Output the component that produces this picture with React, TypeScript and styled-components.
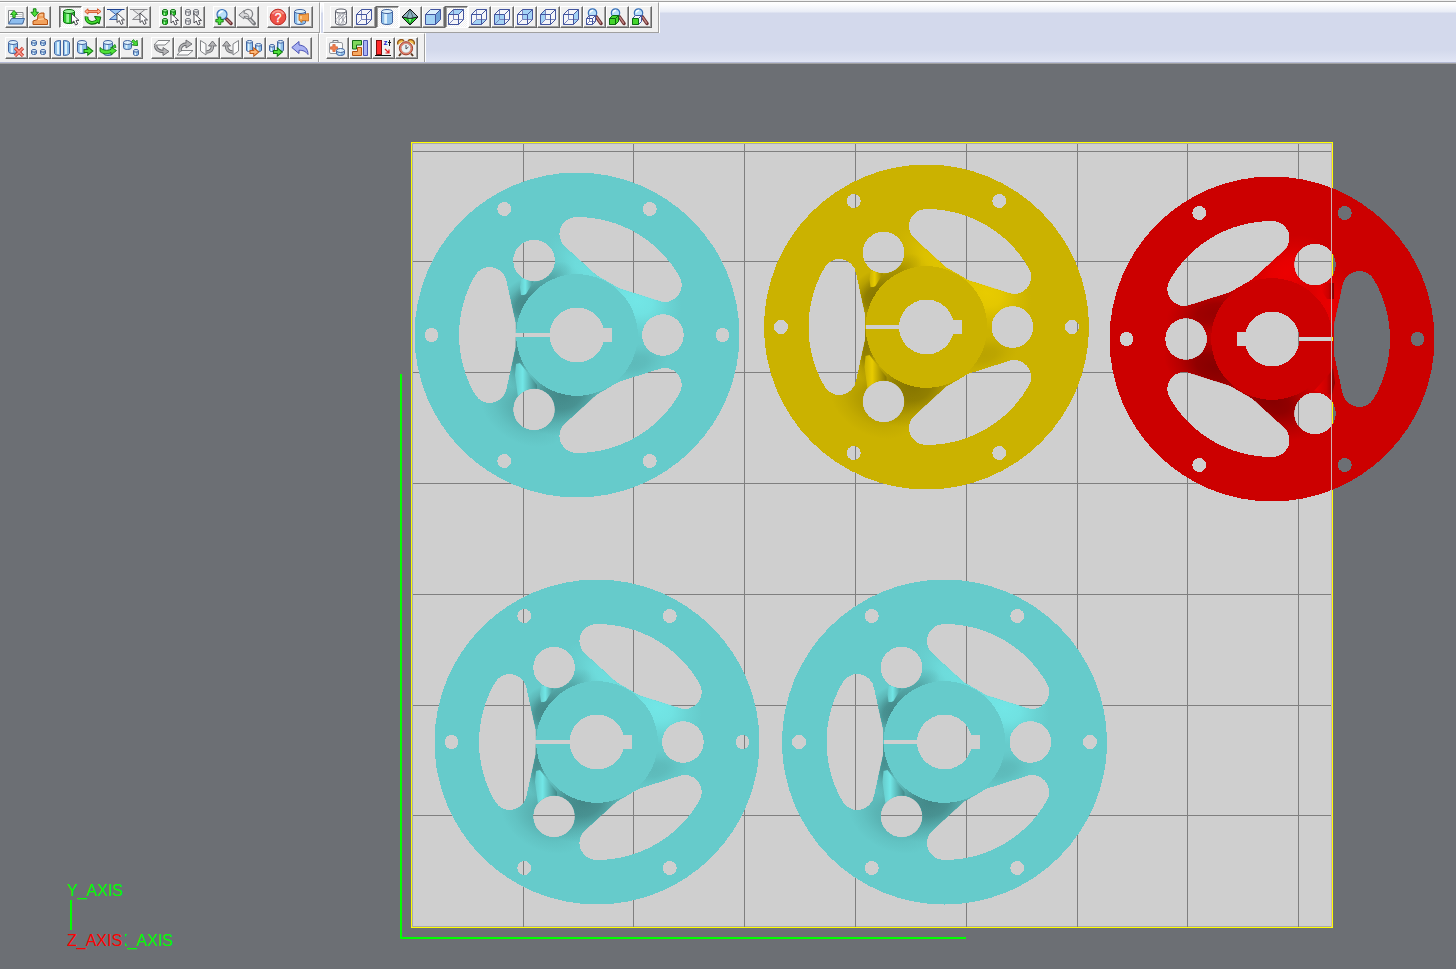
import React from "react";
import styled, { createGlobalStyle } from "styled-components";

const GlobalStyle = createGlobalStyle`
  *, *::before, *::after { box-sizing: border-box; }
  html, body { margin: 0; padding: 0; }
  body { background: #6c6f74; font-family: "Liberation Sans", Arial, sans-serif; }
`;

const Page = styled.div`
  display: grid;
  grid-template-rows: auto minmax(0, 1fr);
  height: 100vh;
  overflow: hidden;
`;

const Header = styled.header`
  display: flex;
  flex-direction: column;
  border-top: 1px solid #f0f0f0;
  border-bottom: 1px solid #a0a0a0;
  box-shadow: inset 0 1px 0 #a0a0a0, inset 0 -1px 0 #b4bad4;
  padding: 1px 0;
  background: linear-gradient(
    to bottom,
    #ffffff 0px,
    #fdfdfe 3px,
    #e8ecf6 11px,
    #d3d9ec 12px,
    #d3d9ec 49px,
    #e2e6f5 62px
  );
`;

const BarRow = styled.div<{ $gap: number }>`
  display: flex;
  gap: ${(p) => p.$gap}px;
`;

const Toolbar = styled.div<{ $first?: boolean; $ruled?: boolean }>`
  display: flex;
  gap: 8px;
  padding: 3px 6px ${(p) => (p.$ruled ? 4 : 3)}px ${(p) => (p.$first ? 5 : 6)}px;
  background: #f0f0f0;
  border: 0 solid #a0a0a0;
  border-top: 1px solid #ffffff;
  border-right-width: 1px;
  border-left: ${(p) => (p.$first ? "0" : "1px solid #ffffff")};
  border-bottom-width: ${(p) => (p.$ruled ? 1 : 0)}px;
  box-shadow: 1px 0 0 #ffffff;
`;

const Group = styled.div`
  display: flex;
`;

const ToolButton = styled.button<{ $pressed?: boolean }>`
  display: flex;
  width: 23px;
  height: 22px;
  padding: 1px;
  border: 1px solid;
  border-color: ${(p) => (p.$pressed ? "#696969 #ffffff #ffffff #696969" : "#ffffff #696969 #696969 #ffffff")};
  box-shadow: ${(p) => (p.$pressed ? "inset 1px 1px 0 #a0a0a0" : "inset -1px -1px 0 #a0a0a0")};
  background: ${(p) =>
    p.$pressed ? "repeating-conic-gradient(#ffffff 0 25%, #f0f0f0 0 50%) 0 0 / 2px 2px" : "#f0f0f0"};
`;

const Glyph = styled.svg`
  display: block;
  flex: none;
  width: 18px;
  height: 18px;
`;

const Viewport = styled.main`
  min-height: 0;
  background: #6c6f74;
`;

const Scene = styled.svg`
  display: block;
  width: 100%;
  height: 100%;
  font-family: "Liberation Sans", Arial, sans-serif;
  font-size: 16px;
`;

/* ---------- icon parts ---------- */

type Tone = "blue" | "green" | "gray";
const tones: Record<Tone, { fill: string; light: string; line: string }> = {
  blue: { fill: "#8fc0ea", light: "#def1fc", line: "#41639f" },
  green: { fill: "#2fc92f", light: "#9af59a", line: "#0c7010" },
  gray: { fill: "#c4c4c8", light: "#f4f4f4", line: "#6d7078" },
};

const Cyl = ({ x, y, w, h, tone = "blue" }: { x: number; y: number; w: number; h: number; tone?: Tone }) => {
  const t = tones[tone];
  const r = w > 7 ? 2 : 1.3;
  const body = `M${x} ${y + r}V${y + h - r}A${w / 2} ${r} 0 0 0 ${x + w} ${y + h - r}V${y + r}`;
  return (
    <g>
      <path d={body} fill={t.fill} stroke={t.line} />
      <rect x={x + w * 0.25} y={y + r + 1} width={w * 0.25} height={h - r * 2} fill={t.light} />
      <ellipse cx={x + w / 2} cy={y + r} rx={w / 2} ry={r} fill={t.light} stroke={t.line} />
    </g>
  );
};

const Cursor = ({ x = 9, y = 5 }: { x?: number; y?: number }) => (
  <path
    transform={`translate(${x} ${y})`}
    d="M.5 .5V10L2.8 8L4.5 12L6.6 11L5 7.4H8Z"
    fill="#fff"
    stroke="#3c3c44"
    strokeWidth=".9"
  />
);

const arrowPath = "M0 -1.4H3.6V-4L8.4 0L3.6 4V1.4H0Z";
const Arrow = ({ x, y, turn = 0, size = 1, fill = "#4fe23a", line = "#0f7a10" }: {
  x: number; y: number; turn?: number; size?: number; fill?: string; line?: string;
}) => (
  <path transform={`translate(${x} ${y}) rotate(${turn}) scale(${size})`} d={arrowPath} fill={fill} stroke={line} />
);

type Face = "top" | "bottom" | "front" | "back" | "left" | "right" | "solid" | "none";
const faces: Partial<Record<Face, string>> = {
  top: "M1.5 6.5L6.5 1.5H16.5L11.5 6.5Z",
  bottom: "M1.5 16.5L6.5 11.5H16.5L11.5 16.5Z",
  front: "M1.5 6.5H11.5V16.5H1.5Z",
  back: "M6.5 1.5H16.5V11.5H6.5Z",
  left: "M1.5 6.5L6.5 1.5V11.5L1.5 16.5Z",
  right: "M11.5 6.5L16.5 1.5V11.5L11.5 16.5Z",
};

const Cube = ({ face }: { face: Face }) => (
  <g strokeLinejoin="round">
    {face === "solid" ? (
      <>
        <path d="M1.5 6.5L6.5 1.5H16.5V11.5L11.5 16.5H1.5Z" fill="#a3d2f5" />
        <path d={faces.top} fill="#dcf0fc" />
        <path d={faces.right} fill="#6fa5da" />
      </>
    ) : (
      <>
        <path d="M1.5 6.5L6.5 1.5H16.5V11.5L11.5 16.5H1.5Z" fill="#f4f5f9" />
        {faces[face] && <path d={faces[face]} fill="#a3d2f5" />}
        <path d="M6.5 1.5V11.5H16.5M6.5 11.5L1.5 16.5" fill="none" stroke="#7884bd" />
      </>
    )}
    <path
      d="M1.5 6.5L6.5 1.5H16.5V11.5L11.5 16.5H1.5ZM1.5 6.5H11.5V16.5M11.5 6.5L16.5 1.5"
      fill="none"
      stroke="#43559f"
    />
  </g>
);

const Lens = ({ x = 6.5, y = 6, r = 4.6 }: { x?: number; y?: number; r?: number }) => (
  <g>
    <path d={`M${x + r * 0.85} ${y + r * 0.85}L16 15.5`} stroke="#6b3032" strokeWidth="3.4" strokeLinecap="round" />
    <path d={`M${x + r} ${y + r}L15.6 15`} stroke="#c08482" strokeWidth="1.4" strokeLinecap="round" />
    <circle cx={x} cy={y} r={r} fill="#b8dff9" stroke="#3a70b8" strokeWidth="1.2" />
    <path d={`M${x - r * 0.55} ${y - 0.4}a${r * 0.6} ${r * 0.6} 0 0 1 ${r * 0.7} ${-r * 0.5}`} stroke="#fff" strokeWidth="1.6" fill="none" />
  </g>
);

const LensCube = ({ fill, all }: { fill: string; all?: boolean }) => (
  <g>
    <Lens x={7.5} y={5} r={4.2} />
    <path d="M1.5 10.5L4.5 7.5H10.5V13.5L7.5 16.5H1.5Z" fill={all ? fill : "#f4f6fc"} stroke={all ? "#0c6a10" : "#43559f"} />
    <path d="M1.5 10.5H7.5V16.5H1.5Z" fill={fill} stroke={fill === "#fff" ? "#43559f" : "#0c6a10"} />
    <path d="M7.5 10.5L10.5 7.5" stroke={all ? "#0c6a10" : "#43559f"} />
    {fill === "#fff" && <path d="M4.5 7.5V13.5H10.5M4.5 13.5L1.5 16.5" stroke="#43559f" strokeWidth=".7" fill="none" />}
  </g>
);

const Hourglass = ({ gray }: { gray?: boolean }) => (
  <g>
    <path
      d="M2.5 1.5L15 11.5H2.5L15 1.5Z"
      fill={gray ? "#e2e2e2" : "#9cc6f2"}
      stroke={gray ? "#8b8b8f" : "#3c62ac"}
    />
    <path d="M0 1.5H17.5" stroke={gray ? "#8b8b8f" : "#1d3f8e"} />
    <Cursor x={9.5} y={4.5} />
  </g>
);

const CylGrid = ({ tone }: { tone: Tone }) => (
  <g>
    <Cyl x={1.5} y={1.5} w={5} h={6} tone={tone} />
    <Cyl x={9.5} y={1.5} w={5} h={6} tone={tone} />
    <Cyl x={1.5} y={10.5} w={5} h={6} tone={tone} />
  </g>
);

const FoldArrow = ({ kind }: { kind: 0 | 1 | 2 | 3 }) => {
  const sheet = ["M1 6L5 1.5H17L12 6Z", "M1 16L5 11.5H17L12 16Z", "M1.5 1.5L7 5V16L1.5 12Z", "M16.5 1.5L11 5V16L16.5 12Z"][kind];
  const curve = ["M2.5 6.5C3 11 7 12.5 11 12.5", "M4 12.5C3.5 7 7 5 11 5", "M7.5 13C11.5 13 13.5 11 13.5 6.5", "M10.5 13C6.5 13 4.5 11 4.5 6.5"][kind];
  const head = ["M10 8.5L16 12.5L10 16.5Z", "M10 1L16 5L10 9Z", "M9.5 7L13.5 2L17.5 7Z", "M.5 7L4.5 2L8.5 7Z"][kind];
  return (
    <g>
      <path d={sheet} fill="#fbfbfb" stroke="#75777b" strokeWidth=".9" />
      <path d={curve} fill="none" stroke="#66686c" strokeWidth="3.4" />
      <path d={head} fill="#b4b4b6" stroke="#66686c" strokeWidth=".9" />
      <path d={curve} fill="none" stroke="#b4b4b6" strokeWidth="1.7" />
    </g>
  );
};

const drawings: Record<string, React.ReactNode> = {
  open: (
    <>
      <path d="M1.5 15V2.5H6L7.5 4.5H16V15Z" fill="#fafafa" stroke="#85888c" />
      <path d="M3 6.5H15M3 8.5H15" stroke="#b8babd" strokeWidth=".8" />
      <path d="M1.5 16L4.5 10.5H17.5L15.5 16Z" fill="#8dbdee" stroke="#41689f" />
      <Arrow x={7} y={9.5} turn={-90} size={0.85} />
    </>
  ),
  importPart: (
    <>
      <path d="M3 16.5V13L7.5 11.5L8 6.5L11 5H14V10.5L17.5 12V16.5Z" fill="#f2a15c" stroke="#b4500f" />
      <path d="M8 11.5L14 10.8M9.5 7H13" stroke="#ffd9ae" />
      <Arrow x={4.7} y={0.8} turn={90} size={0.95} />
    </>
  ),
  selectPart: (<><Cyl x={2.5} y={1.5} w={11} h={14} tone="green" /><Cursor x={10} y={5} /></>),
  movePart: (
    <>
      <path d="M.8 3.5L4 .8V2.6H13.5V.8L17 3.5L13.5 6.2V4.4H4V6.2Z" fill="#ffb08a" stroke="#cf4a1c" strokeWidth=".9" />
      <path d="M2.5 8.5C2 15 9 16.5 13.5 13" fill="none" stroke="#0b6a0b" strokeWidth="3.8" />
      <path d="M10.5 8.5L16.8 9L15 16Z" fill="#35d421" stroke="#0b6a0b" />
      <path d="M2.5 9C2 15 9 16 13.5 12.8" fill="none" stroke="#45dd31" strokeWidth="1.9" />
    </>
  ),
  selectTriangles: <Hourglass />,
  selectTrianglesOff: <Hourglass gray />,
  selectAll: (<><CylGrid tone="green" /><Cursor x={9.5} y={5} /></>),
  selectNone: (<><CylGrid tone="gray" /><Cursor x={9.5} y={5} /></>),
  zoomIn: (
    <>
      <Lens x={7} y={6.5} r={5} />
      <path d="M3.2 9H5.8V11.4H8.2V14H5.8V16.5H3.2V14H.8V11.4H3.2Z" fill="#48e038" stroke="#0b6a0b" strokeWidth=".8" />
    </>
  ),
  zoomBack: (
    <>
      <path d="M11 10L16 15.5" stroke="#77797d" strokeWidth="4" strokeLinecap="round" />
      <path d="M11.5 11L15.6 15.2" stroke="#cfcfd1" strokeWidth="1.5" />
      <circle cx="10" cy="6" r="4.6" fill="#eee" stroke="#808286" strokeWidth="1.3" />
      <path d="M.8 7L6 2.5V5.2C9 5 11 6.5 11 9.5C9.5 8.4 8 8.2 6 8.6V11Z" fill="#d8d8da" stroke="#77797d" strokeWidth=".9" />
    </>
  ),
  help: (
    <>
      <circle cx="9" cy="9" r="7.8" fill="#ee5247" stroke="#bb2b26" />
      <path d="M3.5 6A6.4 6.4 0 0 1 14.5 6" fill="none" stroke="#f8978c" strokeWidth="1.6" />
      <text x="9" y="13.6" fontSize="12" textAnchor="middle" fill="#fff" stroke="#fff" strokeWidth=".3">?</text>
    </>
  ),
  partInfo: (
    <>
      <Cyl x={2.5} y={1.5} w={11} h={15} />
      <path d="M7 6.5H11L16.5 5.5V13L11 12.5H10V14.5L7.5 12.5H7Z" fill="#f2a04a" stroke="#c46a1a" strokeWidth=".8" />
      <path d="M9 8V11" stroke="#fff0c8" />
    </>
  ),
  mesh: (
    <>
      <path d="M3.5 3V15A5.5 2 0 0 0 14.5 15V3A5.5 2 0 0 0 3.5 3A5.5 2 0 0 0 14.5 3" fill="#fdfdfd" stroke="#5c5f69" />
      <path d="M3.5 3L7 8L3.5 12L8 17L11 12L14.5 16M7 5L11 12L14.5 7L11 5L7 8V16M14.5 3L11 8L7 12M11 5V17" fill="none" stroke="#8b8e98" strokeWidth=".7" />
    </>
  ),
  wire: <Cube face="none" />,
  shaded: <Cyl x={3.5} y={1.5} w={11} h={15} />,
  diamond: (
    <>
      <path d="M1 9L9 1L17 9L9 17Z" fill="#26d926" stroke="#111" />
      <path d="M1 9L9 1L17 9L9 10.5Z" fill="#8fb2bf" stroke="#111" />
      <path d="M9 1L6 9.5L9 16.5L12 9.5Z" fill="none" stroke="#1c3238" strokeWidth=".6" />
      <path d="M7.5 11L9 10.8L10.5 11L9 15Z" fill="#7cff7c" />
    </>
  ),
  solid: <Cube face="solid" />,
  top: <Cube face="top" />,
  bottom: <Cube face="bottom" />,
  front: <Cube face="front" />,
  back: <Cube face="back" />,
  left: <Cube face="left" />,
  right: <Cube face="right" />,
  zoomWire: <LensCube fill="#fff" />,
  zoomSolid: <LensCube fill="#44d52c" all />,
  zoomFace: <LensCube fill="#44d52c" />,
  removePart: (
    <>
      <Cyl x={1.5} y={1.5} w={9} h={13} />
      <path d="M8 9L16 17M16 9L8 17" stroke="#c4382c" strokeWidth="3.2" />
      <path d="M8.3 9.3L15.7 16.7M15.7 9.3L8.3 16.7" stroke="#ff9a8a" strokeWidth="1.6" />
    </>
  ),
  arrange: (
    <>
      <Cyl x={1.5} y={1.5} w={5} h={5} /><Cyl x={10.5} y={1.5} w={5} h={5} />
      <Cyl x={1.5} y={10.5} w={5} h={5} /><Cyl x={10.5} y={10.5} w={5} h={5} />
    </>
  ),
  split: (
    <>
      <path d="M7.5 1.5C4 1.5 1.5 2.5 1.5 4V14C1.5 15.6 4 16.5 7.5 16.5Z" fill="#8fc0ea" stroke="#41639f" />
      <path d="M10.5 1.5C14 1.5 16.5 2.5 16.5 4V14C16.5 15.6 14 16.5 10.5 16.5Z" fill="#8fc0ea" stroke="#41639f" />
      <path d="M5 3V15M13 3V15" stroke="#def1fc" strokeWidth="2" />
    </>
  ),
  movePartTo: (<><Cyl x={1.5} y={1.5} w={9} h={13} /><Arrow x={8} y={12} size={1.05} /></>),
  rotatePart: (
    <>
      <Cyl x={4.5} y={1.5} w={9} h={15} />
      <path d="M1 12.5C4 15.5 9 15.5 12 13.5V16L17.5 11.5L12 8V10.3C8 12 4 11.5 1 8.5Z" fill="#4fe23a" stroke="#0f7a10" strokeWidth=".9" />
      <path d="M16 5.5L17 8.5L13 8Z" fill="#4fe23a" stroke="#0f7a10" strokeWidth=".8" />
    </>
  ),
  scalePart: (<><Cyl x={1.5} y={1.5} w={8} h={9} /><Cyl x={11.5} y={10.5} w={5} h={6} /><Arrow x={10.5} y={1.5} turn={45} size={0.85} /></>),
  foldDown: <FoldArrow kind={0} />,
  foldUp: <FoldArrow kind={1} />,
  foldRight: <FoldArrow kind={2} />,
  foldLeft: <FoldArrow kind={3} />,
  copyPart: (<><Cyl x={1.5} y={1.5} w={6} h={11} /><Cyl x={10.5} y={4.5} w={6} h={8} /><Arrow x={5} y={13} size={1.05} fill="#ffb877" line="#c05c18" /></>),
  mergePart: (<><Cyl x={1.5} y={5.5} w={5} h={7} /><Cyl x={9.5} y={1.5} w={6} h={11} /><Arrow x={5.5} y={13} size={1.05} /></>),
  undo: <path d="M.8 8.5L8 2.5V6C13.5 6.5 17 9.5 17 15.5C14.5 12 12 11.3 8 11.3V14.5Z" fill="#a9b2f2" stroke="#4a52b4" />,
  repair: (
    <>
      <path d="M5 4V1.5H10V4" fill="none" stroke="#777a80" />
      <rect x="1.5" y="3.5" width="13" height="11" rx="1.5" fill="#fafafa" stroke="#94979c" />
      <path d="M4.8 5.5H7.2V7.8H9.5V10.2H7.2V12.5H4.8V10.2H2.5V7.8H4.8Z" fill="#f08050" stroke="#c9501f" strokeWidth=".6" />
      <Cyl x={8.5} y={9.5} w={8} h={7} />
    </>
  ),
  nest: (
    <>
      <path d="M1.5 1.5H10.5V6H5.5V10H1.5Z" fill="#7fd85a" stroke="#136a13" />
      <path d="M12.5 1.5H16.5V16.5H12.5Z" fill="#a9b2f2" stroke="#4a52b4" />
      <path d="M10.5 8.5H6.5V12.5H1.5V16.5H10.5Z" fill="#f7a860" stroke="#b4500f" />
    </>
  ),
  zHeight: (
    <>
      <rect x="2.5" y="1.5" width="5" height="14" fill="#ff2a2a" stroke="#7b0d0d" />
      <path d="M1 16.5H17" stroke="#111" />
      <text x="9.4" y="6" fontSize="8" fontWeight="bold" fill="#2026c8">z</text>
      <path d="M15.5 1V7M14 3.5H17" stroke="#15151d" />
      <path d="M11 10L14.5 13.5M15 10.5V14H11.5" stroke="#e02020" fill="none" strokeWidth="1.2" />
    </>
  ),
  clock: (
    <>
      <path d="M1 5.5A3.5 3.5 0 0 1 7 2M17 5.5A3.5 3.5 0 0 0 11 2" fill="#f5c04c" stroke="#93571a" strokeWidth="1.3" />
      <path d="M4 14.5L2 17M14 14.5L16 17" stroke="#59361c" strokeWidth="2" />
      <circle cx="9" cy="9.3" r="6.6" fill="#ea7a64" stroke="#97422f" />
      <circle cx="9" cy="9.3" r="4.8" fill="#e9f2f4" stroke="#b98f83" strokeWidth=".8" />
      <path d="M9 6V10L11.5 8" fill="none" stroke="#4a4a52" />
    </>
  ),
};

type Tool = { icon: string; label: string; pressed?: boolean };
const t = (icon: string, label: string, pressed = false): Tool => ({ icon, label, pressed });

const fileTools: Tool[][] = [
  [t("open", "Open"), t("importPart", "Import part")],
  [
    t("selectPart", "Select part", true),
    t("movePart", "Move or rotate"),
    t("selectTriangles", "Select triangles"),
    t("selectTrianglesOff", "Deselect triangles"),
  ],
  [t("selectAll", "Select all"), t("selectNone", "Select none")],
  [t("zoomIn", "Zoom in"), t("zoomBack", "Previous zoom")],
  [t("help", "Help"), t("partInfo", "Part information")],
];

const viewTools: Tool[][] = [
  [
    t("mesh", "Triangles"),
    t("wire", "Wireframe"),
    t("shaded", "Shaded", true),
    t("diamond", "Facets"),
    t("solid", "Isometric view"),
    t("top", "Top view", true),
    t("bottom", "Bottom view"),
    t("front", "Front view"),
    t("back", "Back view"),
    t("left", "Left view"),
    t("right", "Right view"),
    t("zoomWire", "Zoom platform"),
    t("zoomSolid", "Zoom parts"),
    t("zoomFace", "Zoom selection"),
  ],
];

const partTools: Tool[][] = [
  [
    t("removePart", "Remove part"),
    t("arrange", "Arrange parts"),
    t("split", "Split part"),
    t("movePartTo", "Move part"),
    t("rotatePart", "Rotate part"),
    t("scalePart", "Scale part"),
  ],
  [
    t("foldDown", "Turn down"),
    t("foldUp", "Turn up"),
    t("foldRight", "Turn right"),
    t("foldLeft", "Turn left"),
    t("copyPart", "Copy part"),
    t("mergePart", "Merge parts"),
    t("undo", "Undo"),
  ],
];

const jobTools: Tool[][] = [
  [t("repair", "Repair"), t("nest", "Nest"), t("zHeight", "Z height"), t("clock", "Build time")],
];

const ToolStrip = ({ groups, label, first, ruled }: {
  groups: Tool[][]; label: string; first?: boolean; ruled?: boolean;
}) => (
  <Toolbar role="toolbar" aria-label={label} $first={first} $ruled={ruled}>
    {groups.map((group) => (
      <Group key={group[0].icon}>
        {group.map((tool) => (
          <ToolButton key={tool.icon} type="button" aria-label={tool.label} aria-pressed={tool.pressed} $pressed={tool.pressed}>
            <Glyph viewBox="0 0 18 18" fill="none" aria-hidden="true">
              {drawings[tool.icon]}
            </Glyph>
          </ToolButton>
        ))}
      </Group>
    ))}
  </Toolbar>
);

/* ---------- parts on the build platform ---------- */

const circle = (cx: number, cy: number, r: number) =>
  `M${cx - r} ${cy}a${r} ${r} 0 1 0 ${2 * r} 0a${r} ${r} 0 1 0 ${-2 * r} 0Z`;

const polar = (x: number, y: number, deg: number) => {
  const a = (deg * Math.PI) / 180;
  return `${(x * Math.cos(a) - y * Math.sin(a)).toFixed(2)} ${(x * Math.sin(a) + y * Math.cos(a)).toFixed(2)}`;
};

const slot = (deg: number) => {
  const p = (x: number, y: number) => polar(x, y, deg);
  return (
    `M${p(-102, 59.3)}A118 118 0 0 1 ${p(-102, -59.3)}A17 17 0 0 1 ${p(-70.4, -53.6)}` +
    `L${p(-61.5, -13)}L${p(-61.5, 13)}L${p(-70.4, 53.6)}A17 17 0 0 1 ${p(-102, 59.3)}Z`
  );
};

const onRing = (r: number, deg: number): [number, number] => [
  r * Math.cos((deg * Math.PI) / 180),
  r * Math.sin((deg * Math.PI) / 180),
];

const borePath = "M26.6 -7H35V7H26.6A27.5 27.5 0 0 1 -27.4 2H-61.5V-2H-27.4A27.5 27.5 0 0 1 26.6 -7Z";

const flangePath = [
  circle(0, 0, 162.5),
  ...[0, 60, 120, 180, 240, 300].map((d) => circle(...onRing(145.5, d), 7)),
  ...[0, 120, 240].map((d) => circle(...onRing(85.9, d), 20.8)),
  ...[0, 120, 240].map(slot),
  borePath,
].join("");

const hubPath = circle(0, 0, 60.8) + borePath;

type Paint = { base: string; light: string; dark: string };
const paints: Record<string, Paint> = {
  cyan: { base: "#66cbcb", light: "#72e6e6", dark: "#438888" },
  yellow: { base: "#cbb200", light: "#e8cb00", dark: "#877600" },
  red: { base: "#cc0000", light: "#ec0000", dark: "#860000" },
};

type Shade = { cx: number; cy: number; rx: number; ry: number; turn?: number; tone: "light" | "dark"; alpha: number };

const frontShades: Shade[] = [
  { cx: 60, cy: -34, rx: 46, ry: 36, turn: 20, tone: "light", alpha: 1 },
  { cx: 12, cy: -62, rx: 52, ry: 20, turn: 42, tone: "light", alpha: 0.7 },
  { cx: 58, cy: 28, rx: 34, ry: 18, turn: -15, tone: "dark", alpha: 0.25 },
  { cx: -52, cy: -30, rx: 30, ry: 24, turn: -50, tone: "dark", alpha: 1 },
  { cx: -34, cy: -50, rx: 34, ry: 16, turn: -35, tone: "dark", alpha: 0.6 },
  { cx: -60, cy: 20, rx: 16, ry: 34, tone: "dark", alpha: 0.9 },
  { cx: -14, cy: 60, rx: 52, ry: 40, turn: -10, tone: "dark", alpha: 1 },
  { cx: -52, cy: 74, rx: 48, ry: 34, turn: 30, tone: "dark", alpha: 0.4 },
];

const flippedShades: Shade[] = [
  { cx: 14, cy: -66, rx: 48, ry: 34, turn: -30, tone: "light", alpha: 1 },
  { cx: 58, cy: -34, rx: 30, ry: 50, turn: -20, tone: "light", alpha: 0.9 },
  { cx: -58, cy: -26, rx: 48, ry: 26, turn: -10, tone: "dark", alpha: 0.75 },
  { cx: -58, cy: 28, rx: 52, ry: 32, turn: 20, tone: "dark", alpha: 1 },
  { cx: 0, cy: 60, rx: 54, ry: 34, turn: 35, tone: "dark", alpha: 1 },
];

const Flange = ({ x, y, paint, flipped }: { x: number; y: number; paint: string; flipped?: boolean }) => {
  const p = paints[paint];
  const turn = flipped ? "rotate(180)" : undefined;
  return (
    <g transform={`translate(${x} ${y})`}>
      <path d={flangePath} transform={turn} fill={p.base} fillRule="evenodd" shapeRendering="crispEdges" />
      <g clipPath={flipped ? "url(#flange-flipped)" : "url(#flange-front)"}>
        {(flipped ? flippedShades : frontShades).map((s, i) => (
          <ellipse
            key={i}
            cx={s.cx}
            cy={s.cy}
            rx={s.rx}
            ry={s.ry}
            transform={`rotate(${s.turn ?? 0} ${s.cx} ${s.cy})`}
            fill={`url(#${paint}-${s.tone})`}
            opacity={s.alpha}
          />
        ))}
        {flipped ? (
          <>
            <path d="M50 -56H62V-40H55L48 -50Z" fill={`url(#${paint}-rib-flipped)`} />
            <path d="M42 52L58 34L61 29L63 44L60 56Z" fill={`url(#${paint}-rib-flipped)`} />
          </>
        ) : (
          <>
            <path d="M-56 -56H-42L-51 -41L-53 -40H-56L-57 -48Z" fill={`url(#${paint}-rib)`} />
            <path d="M-61 29L-57 28L-40 50V56L-59 62L-62 40Z" fill={`url(#${paint}-rib)`} />
          </>
        )}
      </g>
      <path d={hubPath} transform={turn} fill={p.base} fillRule="evenodd" shapeRendering="crispEdges" />
    </g>
  );
};

const columns = [523, 633, 744, 855, 966, 1077, 1187, 1298];
const rows = [151, 261, 372, 483, 594, 705, 815];

const Platform = () => (
  <g shapeRendering="crispEdges">
    <rect x="411" y="142" width="922" height="786" fill="#ffff00" />
    <rect x="412" y="143" width="920" height="784" fill="#a9a9a9" />
    <rect x="413" y="144" width="918" height="782" fill="#cfcfcf" />
    {columns.map((x) => (
      <rect key={x} x={x} y="144" width="1" height="783" fill="#7f7f7f" />
    ))}
    {rows.map((y) => (
      <rect key={y} x="413" y={y} width="918" height="1" fill="#7f7f7f" />
    ))}
  </g>
);

export default function App() {
  return (
    <Page>
      <GlobalStyle />
      <Header>
        <BarRow $gap={3}>
          <ToolStrip groups={fileTools} label="File and selection" first ruled />
          <ToolStrip groups={viewTools} label="View" ruled />
        </BarRow>
        <BarRow $gap={0}>
          <ToolStrip groups={partTools} label="Parts" first />
          <ToolStrip groups={jobTools} label="Job" />
        </BarRow>
      </Header>
      <Viewport>
        <Scene viewBox="0 64 1456 905" preserveAspectRatio="xMidYMid slice" role="img" aria-label="Build platform, top view">
          <defs>
            <clipPath id="flange-front">
              <path d={flangePath} clipRule="evenodd" />
            </clipPath>
            <clipPath id="flange-flipped">
              <path d={flangePath} clipRule="evenodd" transform="rotate(180)" />
            </clipPath>
            {Object.entries(paints).map(([name, p]) => (
              <React.Fragment key={name}>
                {(["light", "dark"] as const).map((tone) => (
                  <radialGradient key={tone} id={`${name}-${tone}`}>
                    <stop offset="0" stopColor={p[tone]} />
                    <stop offset=".35" stopColor={p[tone]} stopOpacity=".85" />
                    <stop offset=".7" stopColor={p[tone]} stopOpacity=".3" />
                    <stop offset="1" stopColor={p[tone]} stopOpacity="0" />
                  </radialGradient>
                ))}
                <linearGradient id={`${name}-rib`}>
                  <stop offset="0" stopColor={p.base} />
                  <stop offset=".35" stopColor={p.light} />
                  <stop offset="1" stopColor={p.dark} />
                </linearGradient>
                <linearGradient id={`${name}-rib-flipped`}>
                  <stop offset="0" stopColor={p.light} />
                  <stop offset=".6" stopColor={p.base} />
                  <stop offset="1" stopColor={p.dark} />
                </linearGradient>
              </React.Fragment>
            ))}
          </defs>
          <Platform />
          <Flange x={577} y={335} paint="cyan" />
          <Flange x={926.5} y={327} paint="yellow" />
          <Flange x={1272} y={339} paint="red" flipped />
          <Flange x={597} y={742} paint="cyan" />
          <Flange x={944.5} y={742} paint="cyan" />
          <rect x="1331" y="144" width="1" height="783" fill="#d0b0b0" shapeRendering="crispEdges" />
          <path d="M401 374V938H966" fill="none" stroke="#00ff00" strokeWidth="2" shapeRendering="crispEdges" />
          <path d="M71 900V930" stroke="#00ff00" strokeWidth="2" shapeRendering="crispEdges" />
          <text x="67" y="896" fill="#00ff00">Y_AXIS</text>
          <text x="117" y="946" fill="#00ff00">X_AXIS</text>
          <rect x="66" y="933" width="59" height="17" fill="#6c6f74" />
          <text x="67" y="946" fill="#ff0000">Z_AXIS</text>
        </Scene>
      </Viewport>
    </Page>
  );
}
